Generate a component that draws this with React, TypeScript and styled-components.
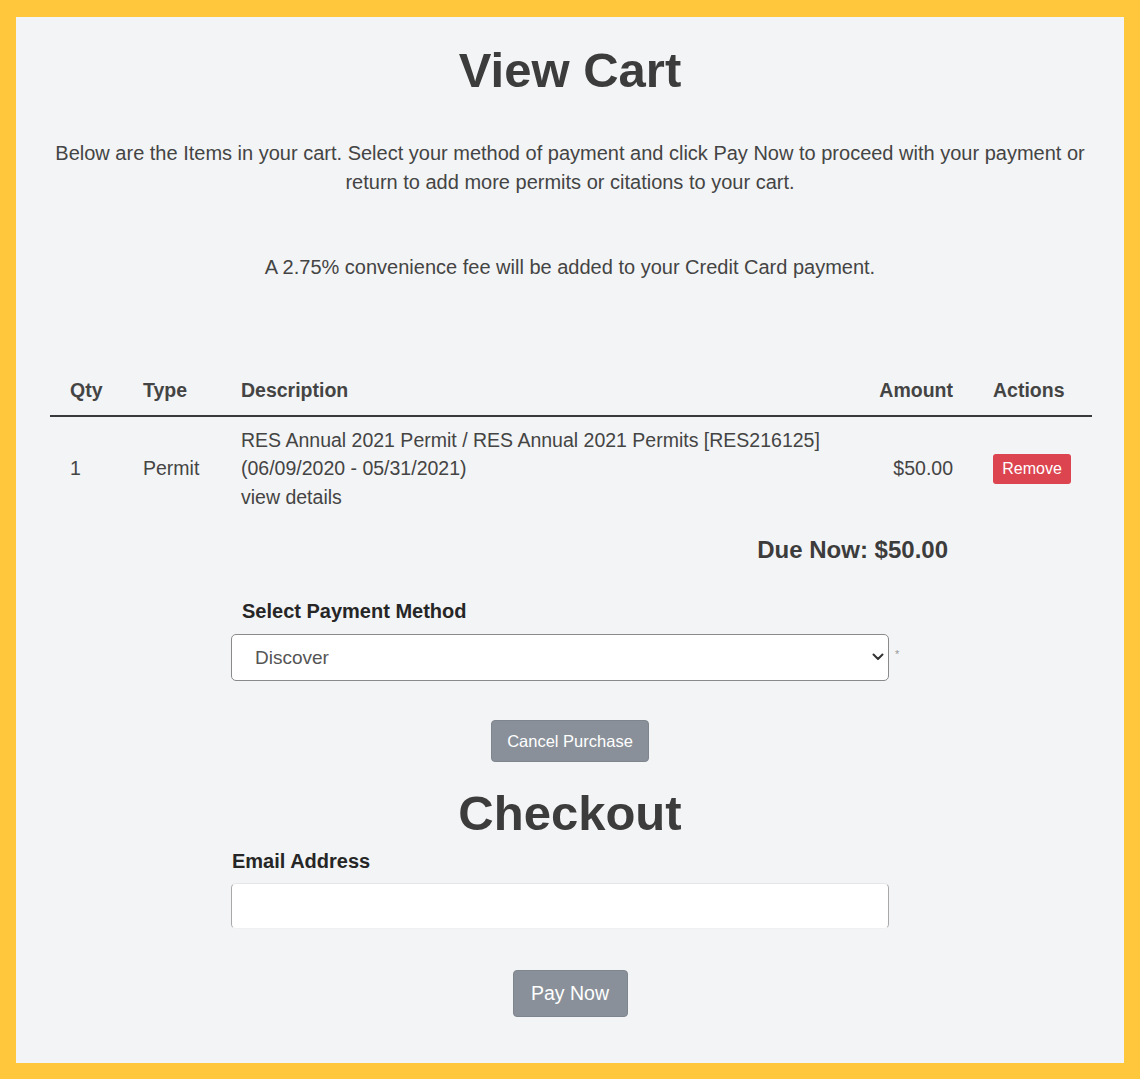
import React from "react";
import styled, { createGlobalStyle } from "styled-components";

const Global = createGlobalStyle`
  html, body { margin: 0; padding: 0; background: #ffc83c; }
  body { font-family: "Liberation Sans", Arial, Helvetica, sans-serif; color: #444; }
  * { box-sizing: border-box; }
`;

const Frame = styled.div`
  width: 1140px;
  height: 1079px;
  padding: 17px 16px 16px 16px;
  background: #ffc83c;
`;

const Panel = styled.main`
  height: 1046px;
  background: #f3f4f5;
  display: flex;
  flex-direction: column;
  align-items: center;
  padding-top: 24px;
`;

const Heading = styled.h1<{ $mt?: number }>`
  margin: ${(p) => p.$mt ?? 0}px 0 0 0;
  font-size: 49px;
  line-height: 1.2;
  font-weight: 700;
  color: #3c3c3c;
  text-align: center;
`;

const Intro = styled.p<{ $mt: number }>`
  margin: ${(p) => p.$mt}px 0 0 0;
  width: 1060px;
  font-size: 20px;
  line-height: 29px;
  text-align: center;
  color: #444;
`;

const Table = styled.div`
  margin-top: 94px;
  width: 1042px;
  align-self: flex-start;
  margin-left: 34px;
  display: grid;
  grid-template-columns: 73px 98px 1fr 120px 119px;
`;

const HeadCell = styled.div<{ $right?: boolean }>`
  padding: 0 20px 10px 20px;
  font-size: 19.5px;
  line-height: 29px;
  font-weight: 700;
  color: #444;
  text-align: ${(p) => (p.$right ? "right" : "left")};
  border-bottom: 2px solid #3a3a3a;
`;

const Cell = styled.div<{ $right?: boolean }>`
  padding: 9px 20px 0 20px;
  font-size: 19.5px;
  line-height: 28.5px;
  color: #444;
  display: flex;
  flex-direction: column;
  justify-content: center;
  align-items: ${(p) => (p.$right ? "flex-end" : "flex-start")};
  white-space: nowrap;
`;

const RemoveButton = styled.button`
  width: 78px;
  height: 30px;
  border: none;
  border-radius: 3px;
  background: #dc4550;
  color: #fff;
  font-family: inherit;
  font-size: 16px;
  padding: 0;
  margin-top: 0;
`;

const DueNow = styled.div`
  align-self: flex-start;
  width: 932px;
  margin-top: 25px;
  text-align: right;
  font-size: 24px;
  line-height: 1.2;
  font-weight: 700;
  color: #3c3c3c;
`;

const Form = styled.div`
  width: 678px;
  display: flex;
  flex-direction: column;
  align-items: flex-start;
`;

const Label = styled.label<{ $mt: number; $indent?: number }>`
  margin-top: ${(p) => p.$mt}px;
  padding-left: ${(p) => p.$indent ?? 0}px;
  font-size: 20px;
  line-height: 1.2;
  font-weight: 700;
  color: #262626;
`;

const SelectRow = styled.div`
  margin-top: 11px;
  display: flex;
  align-items: flex-start;
  position: relative;
`;

const Select = styled.select`
  appearance: none;
  -webkit-appearance: none;
  width: 658px;
  height: 47px;
  border: 1px solid #8a8a8a;
  border-radius: 5px;
  background: #fff;
  padding: 0 0 0 23px;
  font-family: inherit;
  font-size: 19px;
  color: #555;
  outline: none;
`;

const Chevron = styled.svg`
  position: absolute;
  left: 641px;
  top: 19px;
  pointer-events: none;
`;

const Required = styled.span`
  margin-left: 6px;
  margin-top: 14px;
  font-size: 11px;
  color: #999;
`;

const GrayButton = styled.button<{ $mt: number; $w: number; $h: number; $fs: number }>`
  margin-top: ${(p) => p.$mt}px;
  width: ${(p) => p.$w}px;
  height: ${(p) => p.$h}px;
  border: 1px solid #7f858d;
  border-radius: 4px;
  background: #899099;
  color: #fff;
  font-family: inherit;
  font-size: ${(p) => p.$fs}px;
  padding: 0;
`;

const EmailInput = styled.input`
  margin-top: 10px;
  width: 658px;
  height: 46px;
  border: 1px solid #a8a8a8;
  border-top-color: #e6e6e6;
  border-bottom-color: #f0f0f0;
  border-radius: 5px;
  background: #fff;
  outline: none;
`;

export default function App() {
  return (
    <>
      <Global />
      <Frame>
        <Panel>
          <Heading>View Cart</Heading>
          <Intro $mt={39}>
            Below are the Items in your cart. Select your method of payment and click Pay Now to proceed with your payment or
            return to add more permits or citations to your cart.
          </Intro>
          <Intro $mt={56}>A 2.75% convenience fee will be added to your Credit Card payment.</Intro>

          <Table>
            <HeadCell>Qty</HeadCell>
            <HeadCell>Type</HeadCell>
            <HeadCell>Description</HeadCell>
            <HeadCell $right>Amount</HeadCell>
            <HeadCell>Actions</HeadCell>

            <Cell>1</Cell>
            <Cell>Permit</Cell>
            <Cell>
              <span>RES Annual 2021 Permit / RES Annual 2021 Permits [RES216125]</span>
              <span>(06/09/2020 - 05/31/2021)</span>
              <span>view details</span>
            </Cell>
            <Cell $right>$50.00</Cell>
            <Cell>
              <RemoveButton>Remove</RemoveButton>
            </Cell>
          </Table>

          <DueNow>Due Now: $50.00</DueNow>

          <Form>
            <Label $mt={34} $indent={11}>Select Payment Method</Label>
            <SelectRow>
              <Select defaultValue="discover">
                <option value="discover">Discover</option>
                <option value="visa">Visa</option>
                <option value="mastercard">MasterCard</option>
              </Select>
              <Chevron width="12" height="8" viewBox="0 0 12 8">
                <path d="M1.5 1.5 L6 6 L10.5 1.5" fill="none" stroke="#333" strokeWidth="2" strokeLinecap="round" strokeLinejoin="round" />
              </Chevron>
              <Required>*</Required>
            </SelectRow>
          </Form>

          <GrayButton $mt={39} $w={158} $h={42} $fs={16.5}>Cancel Purchase</GrayButton>

          <Heading $mt={22}>Checkout</Heading>

          <Form>
            <Label $mt={6} $indent={1}>Email Address</Label>
            <EmailInput type="email" />
          </Form>

          <GrayButton $mt={41} $w={115} $h={47} $fs={19.5}>Pay Now</GrayButton>
        </Panel>
      </Frame>
    </>
  );
}
